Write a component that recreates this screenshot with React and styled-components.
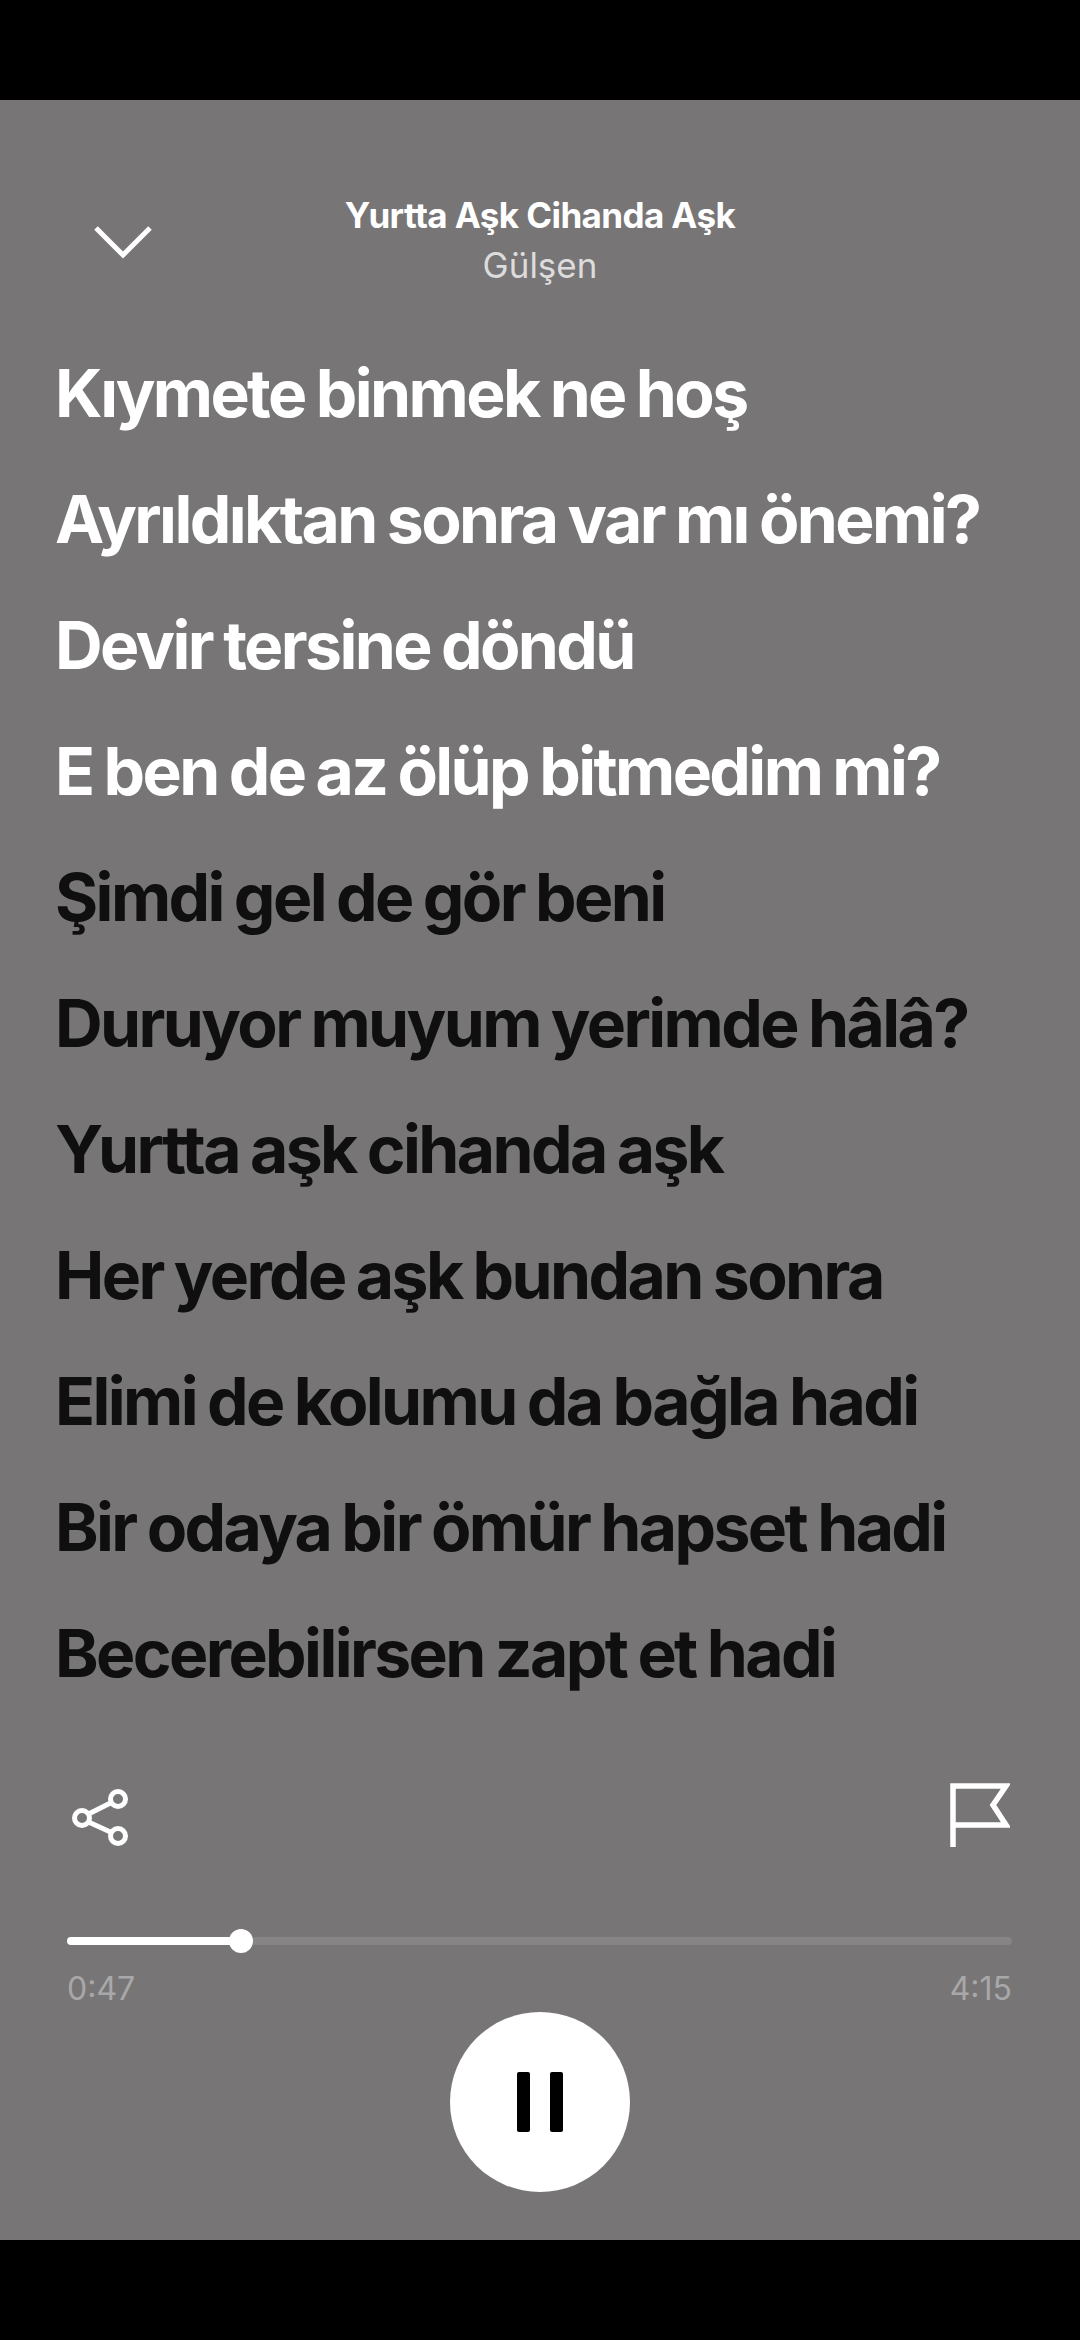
import React from "react";
import styled, { createGlobalStyle } from "styled-components";

const LYRICS = [
  { text: "Kıymete binmek ne hoş", sung: true },
  { text: "Ayrıldıktan sonra var mı önemi?", sung: true },
  { text: "Devir tersine döndü", sung: true },
  { text: "E ben de az ölüp bitmedim mi?", sung: true },
  { text: "Şimdi gel de gör beni" },
  { text: "Duruyor muyum yerimde hâlâ?" },
  { text: "Yurtta aşk cihanda aşk" },
  { text: "Her yerde aşk bundan sonra" },
  { text: "Elimi de kolumu da bağla hadi" },
  { text: "Bir odaya bir ömür hapset hadi" },
  { text: "Becerebilirsen zapt et hadi" },
];

const PROGRESS = 47 / 255;

export default function App() {
  return (
    <>
      <GlobalStyle />
      <Screen>
        <Panel>
          <Header>
            <CloseButton aria-label="Close">
              <svg width="58" height="34" viewBox="0 0 58 34" fill="none">
                <path d="M2 3 L29 30 L56 3" stroke="#fff" strokeWidth="5" />
              </svg>
            </CloseButton>
            <TrackInfo>
              <TrackTitle>Yurtta Aşk Cihanda Aşk</TrackTitle>
              <TrackArtist>Gülşen</TrackArtist>
            </TrackInfo>
          </Header>

          <LyricList>
            {LYRICS.map((line) => (
              <LyricLine key={line.text} $sung={line.sung}>
                {line.text}
              </LyricLine>
            ))}
          </LyricList>

          <ActionRow>
            <IconButton aria-label="Share">
              <svg width="58" height="58" viewBox="0 0 58 58" fill="none" stroke="#fff" strokeWidth="5">
                <circle cx="46" cy="10" r="7.5" />
                <circle cx="10" cy="29" r="7.5" />
                <circle cx="46" cy="47" r="7.5" />
                <path d="M16.5 25 L39.5 13.5 M16.5 33 L39.5 43.5" />
              </svg>
            </IconButton>
            <IconButton aria-label="Report">
              <svg width="60" height="64" viewBox="0 0 60 64" fill="none" stroke="#fff" strokeWidth="5.5">
                <path d="M3 64 V3 H56 L43 22 L56 42 H3" />
              </svg>
            </IconButton>
          </ActionRow>

          <Progress>
            <Track>
              <Fill style={{ width: `${PROGRESS * 100}%` }}>
                <Thumb />
              </Fill>
            </Track>
            <Times>
              <span>0:47</span>
              <span>4:15</span>
            </Times>
          </Progress>

          <PauseButton aria-label="Pause">
            <PauseBar />
            <PauseBar />
          </PauseButton>
        </Panel>
      </Screen>
    </>
  );
}

const GlobalStyle = createGlobalStyle`
  html, body {
    margin: 0;
    background: #000;
  }
  * {
    box-sizing: border-box;
  }
  button {
    border: none;
    background: none;
    padding: 0;
  }
`;

const Screen = styled.div`
  width: 1080px;
  height: 2340px;
  padding: 100px 0;
  background: #000;
  font-family: Inter, "Liberation Sans", sans-serif;
`;

const Panel = styled.main`
  height: 2140px;
  background: #777576;
  display: flex;
  flex-direction: column;
`;

const Header = styled.header`
  position: relative;
  height: 230px;
  display: flex;
  justify-content: center;
  padding-top: 94px;
`;

const CloseButton = styled.button`
  position: absolute;
  left: 94px;
  top: 125px;
  display: flex;
`;

const TrackInfo = styled.div`
  display: flex;
  flex-direction: column;
  align-items: center;
  gap: 8px;
`;

const TrackTitle = styled.div`
  font-size: 35px;
  line-height: 42px;
  font-weight: 700;
  letter-spacing: -0.6px;
  color: #fff;
`;

const TrackArtist = styled.div`
  font-size: 35px;
  line-height: 42px;
  font-weight: 400;
  color: #dcdcdc;
`;

const LyricList = styled.div`
  padding-left: 55px;
  display: flex;
  flex-direction: column;
`;

const LyricLine = styled.div`
  height: 126px;
  font-size: 66px;
  line-height: 126px;
  font-weight: 700;
  letter-spacing: -2.6px;
  word-spacing: -2px;
  white-space: nowrap;
  color: ${(props) => (props.$sung ? "#fff" : "#0f0f0f")};
`;

const ActionRow = styled.div`
  margin-top: 67px;
  padding: 0 70px 0 72px;
  display: flex;
  align-items: flex-end;
  justify-content: space-between;
`;

const IconButton = styled.button`
  display: flex;
`;

const Progress = styled.div`
  margin-top: 90px;
  padding: 0 68px 0 67px;
`;

const Track = styled.div`
  height: 8px;
  border-radius: 4px;
  background: #868485;
`;

const Fill = styled.div`
  position: relative;
  height: 100%;
  border-radius: 4px;
  background: #fff;
`;

const Thumb = styled.div`
  position: absolute;
  right: -12px;
  top: -8px;
  width: 24px;
  height: 24px;
  border-radius: 50%;
  background: #fff;
`;

const Times = styled.div`
  margin-top: 25px;
  display: flex;
  justify-content: space-between;
  font-size: 32px;
  line-height: 38px;
  font-weight: 400;
  color: #a9a8a9;
`;

const PauseButton = styled.button`
  align-self: center;
  margin-top: 4px;
  width: 180px;
  height: 180px;
  border-radius: 50%;
  background: #fff;
  display: flex;
  align-items: center;
  justify-content: center;
  gap: 20px;
`;

const PauseBar = styled.span`
  width: 13px;
  height: 60px;
  border-radius: 2px;
  background: #000;
`;
